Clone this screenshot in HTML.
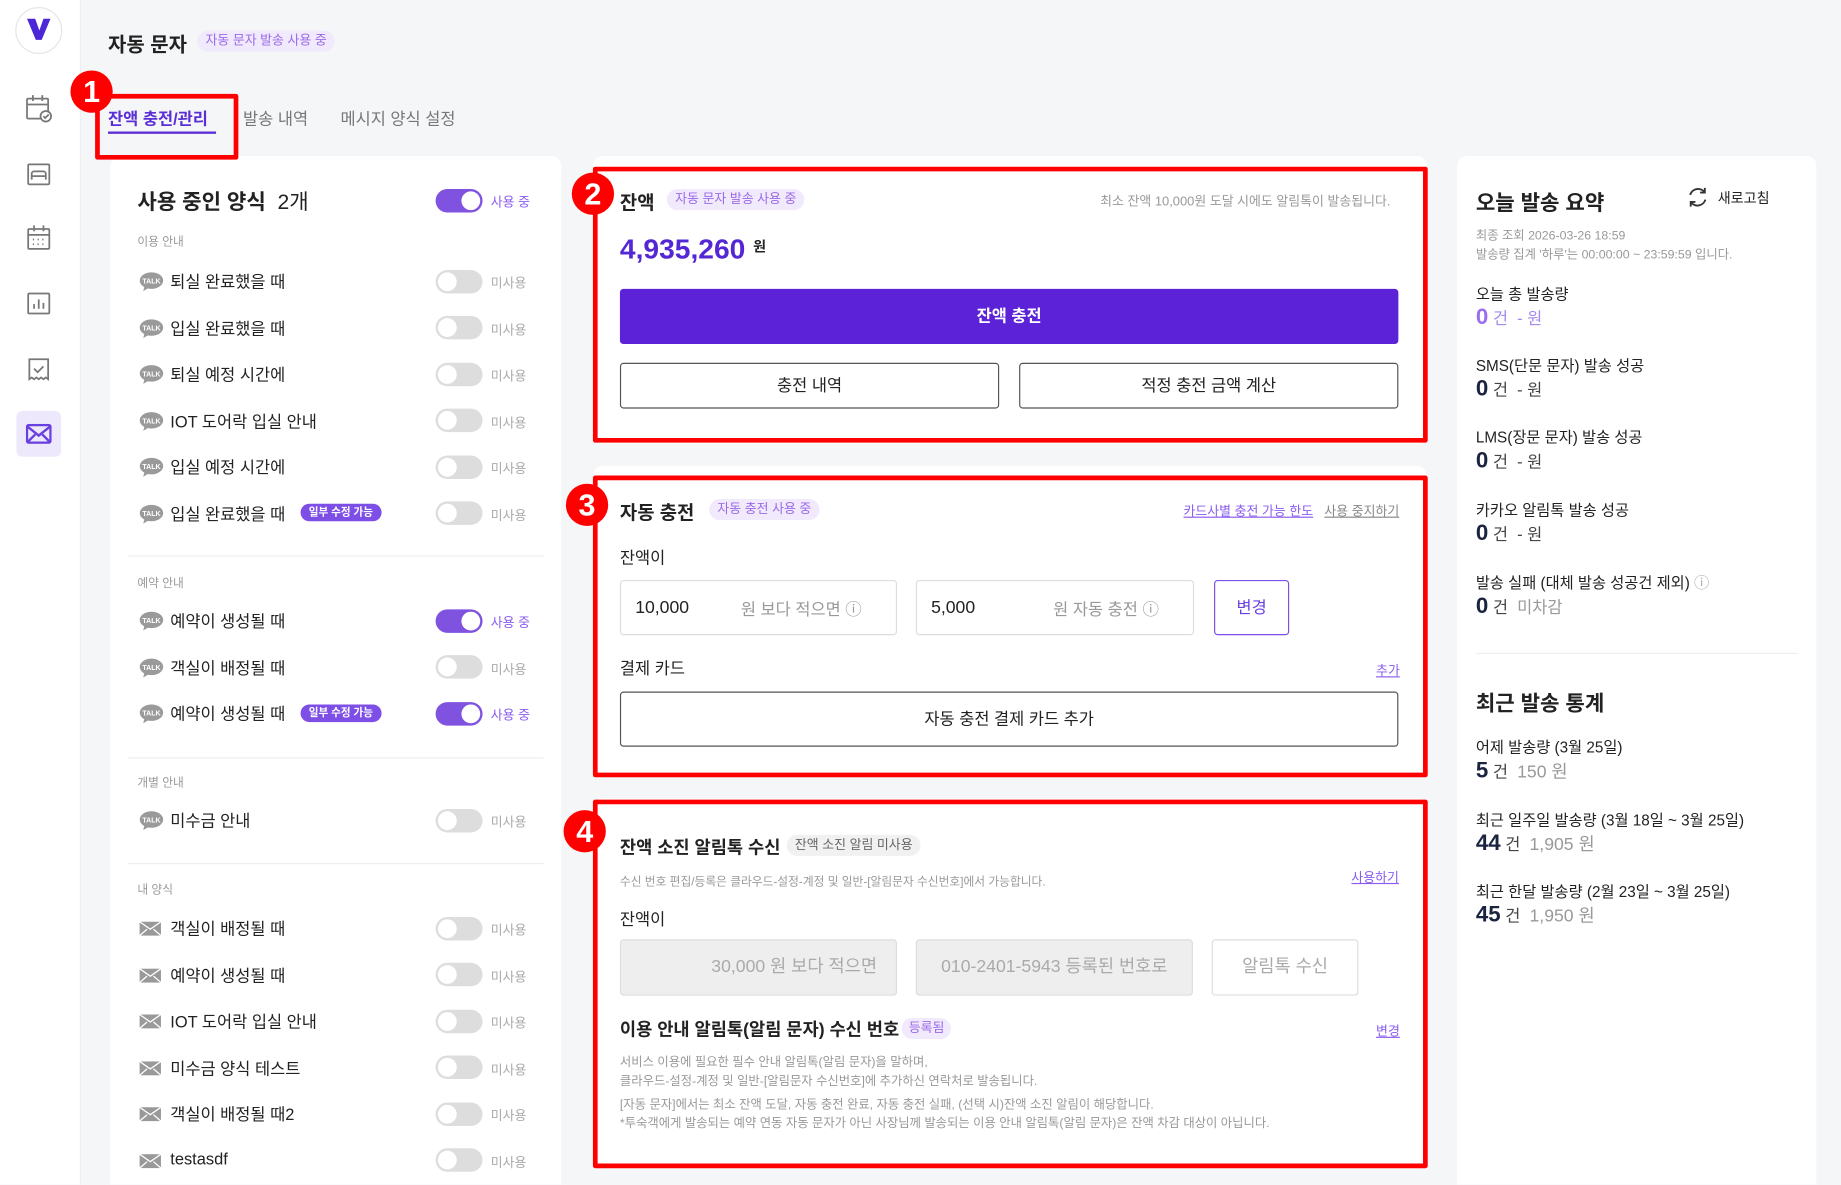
<!DOCTYPE html>
<html><head><meta charset="utf-8">
<style>
html,body{margin:0;padding:0;width:1841px;height:1185px;overflow:hidden;background:#f5f6f8;}
#w{position:absolute;left:0;top:0;width:1568px;height:1009px;overflow:hidden;transform:scale(1.17411);transform-origin:0 0;font-family:"Liberation Sans","Noto Sans CJK KR",sans-serif;color:#222;}
.a{position:absolute;white-space:nowrap;}
.card{position:absolute;background:#fff;border-radius:8px;}
.red{position:absolute;border:4px solid #f00;box-sizing:border-box;border-radius:2px;}
.num{position:absolute;width:36px;height:36px;border-radius:50%;background:#f00;color:#fff;font:bold 26px "Liberation Sans",sans-serif;text-align:center;line-height:36px;}
.badge{position:absolute;background:#f1eafd;color:#9a6ae8;font-size:11px;border-radius:9px;height:18px;line-height:18px;padding:0 7px;white-space:nowrap;}
.tg{position:absolute;width:40px;height:20px;border-radius:10px;background:#ddd;left:371px;}
.tg::after{content:"";position:absolute;top:2px;left:2px;width:16px;height:16px;border-radius:50%;background:#fff;}
.tg.on{background:#7f52e0;}
.tg.on::after{left:22px;}
.tl{position:absolute;left:418px;font-size:11px;color:#aaa;}
.tl.on{color:#8a5cf0;}
.row{position:absolute;left:145px;font-size:14px;color:#222;}
.ic{position:absolute;left:118px;}
.sec{position:absolute;left:117px;font-size:10px;color:#999;}
.hr{position:absolute;left:109px;width:354px;height:1px;background:#eee;}
.btn{position:absolute;box-sizing:border-box;border:1px solid #555;border-radius:3px;background:#fff;text-align:center;font-size:14px;color:#222;}
.inp{position:absolute;box-sizing:border-box;border:1px solid #ddd;border-radius:3px;background:#fff;font-size:15px;}
.g{color:#999;}
.lab{position:absolute;left:1257px;font-size:13px;color:#222;}
.val{position:absolute;left:1257px;font-size:14px;color:#444;}
.val b{font-size:19px;color:#1a2340;font-weight:bold;}
.sm{font-size:11px;color:#999;}
</style></head><body><div id="w">

<!-- sidebar -->
<div class="a" style="left:0;top:0;width:68px;height:1009px;background:#fff;border-right:1px solid #eceef2;"></div>
<div class="a" style="left:13px;top:6px;width:38px;height:38px;border-radius:50%;border:1px solid #e5e5e5;background:#fff;"></div>
<svg class="a" style="left:22px;top:15px" width="22" height="20" viewBox="0 0 22 20"><path d="M1 1h7l3.5 10L15 1h6l-7.5 18h-5z" fill="#4b27d8"/></svg>
<svg class="a" style="left:20px;top:80px" width="26" height="310" viewBox="0 0 26 310" fill="none" stroke="#777" stroke-width="1.5">
 <rect x="3" y="4" width="18" height="17" rx="1"/><path d="M3 9h18M8 1v5M16 1v5"/><circle cx="19" cy="19" r="4.5" fill="#fff"/><path d="M17 19l1.5 1.5 3-3"/>
 <rect x="4" y="60" width="18" height="17" rx="1"/><path d="M7 73v-5a2 2 0 012-2h8a2 2 0 012 2v5M7 70h12"/>
 <rect x="4" y="115" width="18" height="17" rx="1"/><path d="M4 120h18M9 112v5M17 112v5M8 124h1M12 124h1M16 124h1M8 128h1M12 128h1M16 128h1"/>
 <rect x="4" y="170" width="18" height="17" rx="1"/><path d="M9 183v-4M13 183v-8M17 183v-5"/>
 <path d="M5 226v17l2-1.5 2 1.5 2-1.5 2 1.5 2-1.5 2 1.5 2-1.5 2 1.5v-17z"/><path d="M9 234l3 3 5-5"/>
</svg>
<div class="a" style="left:14px;top:350px;width:38px;height:39px;border-radius:5px;background:#ede8fb;"></div>
<svg class="a" style="left:22px;top:361px" width="22" height="17" viewBox="0 0 22 17" fill="none" stroke="#6a3fe0" stroke-width="2"><rect x="1" y="1" width="20" height="15" rx="1.5"/><path d="M1 2l10 8 10-8M1 16l7-7M21 16l-7-7"/></svg>

<!-- header -->
<div class="a" style="left:92px;top:24px;font-size:17px;font-weight:bold;">자동 문자</div>
<div class="badge" style="left:168px;top:26px;">자동 문자 발송 사용 중</div>
<div class="a" style="left:92px;top:91px;font-size:14px;font-weight:bold;color:#5b2fd6;">잔액 충전/관리</div>
<div class="a" style="left:92px;top:112px;width:92px;height:2px;background:#5b2fd6;"></div>
<div class="a" style="left:207px;top:91px;font-size:14px;color:#777;">발송 내역</div>
<div class="a" style="left:290px;top:91px;font-size:14px;color:#777;">메시지 양식 설정</div>

<!-- left card -->
<div class="card" style="left:94px;top:133px;width:384px;height:876px;border-radius:8px 8px 0 0;"></div>
<div class="a" style="left:117px;top:158px;font-size:18px;font-weight:bold;">사용 중인 양식 &nbsp;<span style="font-weight:normal">2개</span></div>
<div class="tg on" style="top:161px"></div><div class="tl on" style="top:164px">사용 중</div>
<div class="sec" style="top:197px">이용 안내</div>

<!-- middle card 1 -->
<div class="card" style="left:505px;top:133px;width:710px;height:245px;"></div>
<div class="a" style="left:528px;top:159px;font-size:16px;font-weight:bold;">잔액</div>
<div class="badge" style="left:568px;top:161px;">자동 문자 발송 사용 중</div>
<div class="a sm" style="left:937px;top:163px;">최소 잔액 10,000원 도달 시에도 알림톡이 발송됩니다.</div>
<div class="a" style="left:528px;top:199px;font-size:24px;font-weight:bold;color:#5427d4;">4,935,260 <span style="font-size:12px;color:#222;vertical-align:6px;">원</span></div>
<div class="a" style="left:528px;top:246px;width:663px;height:47px;background:#5b22d8;border-radius:3px;color:#fff;font-size:14px;font-weight:bold;text-align:center;line-height:47px;">잔액 충전</div>
<div class="btn" style="left:528px;top:309px;width:323px;height:39px;line-height:37px;">충전 내역</div>
<div class="btn" style="left:868px;top:309px;width:323px;height:39px;line-height:37px;">적정 충전 금액 계산</div>

<!-- middle card 2 -->
<div class="card" style="left:505px;top:397px;width:710px;height:263px;"></div>
<div class="a" style="left:528px;top:423px;font-size:16px;font-weight:bold;">자동 충전</div>
<div class="badge" style="left:604px;top:425px;">자동 충전 사용 중</div>
<div class="a" style="left:1008px;top:427px;font-size:11px;color:#8a5cf0;text-decoration:underline;">카드사별 충전 가능 한도</div>
<div class="a" style="left:1128px;top:427px;font-size:11px;color:#888;text-decoration:underline;">사용 중지하기</div>
<div class="a" style="left:528px;top:465px;font-size:14px;">잔액이</div>
<div class="inp" style="left:528px;top:494px;width:236px;height:47px;"><span class="a" style="left:12px;top:14px;">10,000</span><span class="a g" style="left:102px;top:14px;font-size:14px;">원 보다 적으면 ⓘ</span></div>
<div class="inp" style="left:780px;top:494px;width:237px;height:47px;"><span class="a" style="left:12px;top:14px;">5,000</span><span class="a g" style="left:116px;top:14px;font-size:14px;">원 자동 충전 ⓘ</span></div>
<div class="a" style="left:1034px;top:494px;width:64px;height:47px;box-sizing:border-box;border:1px solid #7c4fe6;border-radius:3px;color:#6a3fe0;font-size:14px;text-align:center;line-height:45px;">변경</div>
<div class="a" style="left:528px;top:559px;font-size:14px;">결제 카드</div>
<div class="a" style="left:1172px;top:563px;font-size:11px;color:#8a5cf0;text-decoration:underline;">추가</div>
<div class="btn" style="left:528px;top:589px;width:663px;height:47px;line-height:45px;">자동 충전 결제 카드 추가</div>

<!-- middle card 3 -->
<div class="card" style="left:505px;top:680px;width:710px;height:315px;"></div>
<div class="a" style="left:528px;top:711px;font-size:15px;font-weight:bold;">잔액 소진 알림톡 수신</div>
<div class="badge" style="left:670px;top:711px;background:#f1f1f1;color:#666;">잔액 소진 알림 미사용</div>
<div class="a sm" style="left:528px;top:742px;font-size:10px;">수신 번호 편집/등록은 클라우드-설정-계정 및 일반-[알림문자 수신번호]에서 가능합니다.</div>
<div class="a" style="left:1151px;top:739px;font-size:11px;color:#8a5cf0;text-decoration:underline;">사용하기</div>
<div class="a" style="left:528px;top:773px;font-size:14px;">잔액이</div>
<div class="inp" style="left:528px;top:800px;width:236px;height:48px;background:#eee;color:#aaa;text-align:right;padding-right:16px;line-height:46px;">30,000 원 보다 적으면</div>
<div class="inp" style="left:780px;top:800px;width:236px;height:48px;background:#eee;color:#aaa;text-align:center;line-height:46px;">010-2401-5943 등록된 번호로</div>
<div class="inp" style="left:1032px;top:800px;width:125px;height:48px;color:#aaa;text-align:center;line-height:46px;">알림톡 수신</div>
<div class="a" style="left:528px;top:866px;font-size:15px;font-weight:bold;">이용 안내 알림톡(알림 문자) 수신 번호</div>
<div class="badge" style="left:768px;top:867px;padding:0 6px;">등록됨</div>
<div class="a" style="left:1172px;top:870px;font-size:11px;color:#8a5cf0;text-decoration:underline;">변경</div>
<div class="a sm" style="left:528px;top:897px;font-size:10.5px;line-height:16px;">서비스 이용에 필요한 필수 안내 알림톡(알림 문자)을 말하며,<br>클라우드-설정-계정 및 일반-[알림문자 수신번호]에 추가하신 연락처로 발송됩니다.</div>
<div class="a sm" style="left:528px;top:933px;font-size:10.5px;line-height:16px;">[자동 문자]에서는 최소 잔액 도달, 자동 충전 완료, 자동 충전 실패, (선택 시)잔액 소진 알림이 해당합니다.<br>*투숙객에게 발송되는 예약 연동 자동 문자가 아닌 사장님께 발송되는 이용 안내 알림톡(알림 문자)은 잔액 차감 대상이 아닙니다.</div>

<!-- right card -->
<div class="card" style="left:1241px;top:133px;width:306px;height:876px;border-radius:8px 8px 0 0;"></div>
<div class="a" style="left:1257px;top:159px;font-size:18px;font-weight:bold;">오늘 발송 요약</div>
<svg class="a" style="left:1436px;top:158px" width="20" height="20" viewBox="0 0 20 20" fill="none" stroke="#333" stroke-width="1.6"><path d="M16 6A7 7 0 003.5 8M4 14a7 7 0 0012.5-2"/><path d="M16 2v4h-4M4 18v-4h4"/></svg>
<div class="a" style="left:1463px;top:160px;font-size:12px;">새로고침</div>
<div class="a sm" style="left:1257px;top:193px;font-size:10.5px;line-height:16px;">최종 조회 2026-03-26 18:59<br>발송량 집계 '하루'는 00:00:00 ~ 23:59:59 입니다.</div>
<div class="lab" style="top:240px">오늘 총 발송량</div>
<div class="val" style="top:260px;color:#a58af0;"><b style="color:#9a6ef0">0</b> 건 &nbsp;- 원</div>
<div class="lab" style="top:301px">SMS(단문 문자) 발송 성공</div>
<div class="val" style="top:321px"><b>0</b> 건 &nbsp;- 원</div>
<div class="lab" style="top:362px">LMS(장문 문자) 발송 성공</div>
<div class="val" style="top:382px"><b>0</b> 건 &nbsp;- 원</div>
<div class="lab" style="top:424px">카카오 알림톡 발송 성공</div>
<div class="val" style="top:444px"><b>0</b> 건 &nbsp;- 원</div>
<div class="lab" style="top:486px">발송 실패 (대체 발송 성공건 제외) <span style="color:#aaa">ⓘ</span></div>
<div class="val" style="top:506px"><b>0</b> 건 &nbsp;<span class="g">미차감</span></div>
<div class="a" style="left:1257px;top:556px;width:274px;height:1px;background:#eee;"></div>
<div class="a" style="left:1257px;top:585px;font-size:18px;font-weight:bold;">최근 발송 통계</div>
<div class="lab" style="top:626px">어제 발송량 (3월 25일)</div>
<div class="val" style="top:646px"><b>5</b> 건 &nbsp;<span class="g" style="font-size:15px">150 원</span></div>
<div class="lab" style="top:688px">최근 일주일 발송량 (3월 18일 ~ 3월 25일)</div>
<div class="val" style="top:708px"><b>44</b> 건 &nbsp;<span class="g" style="font-size:15px">1,905 원</span></div>
<div class="lab" style="top:749px">최근 한달 발송량 (2월 23일 ~ 3월 25일)</div>
<div class="val" style="top:769px"><b>45</b> 건 &nbsp;<span class="g" style="font-size:15px">1,950 원</span></div>

<!-- left rows -->
<svg width="0" height="0" style="position:absolute"><defs>
<symbol id="talk" viewBox="0 0 22 18"><ellipse cx="11" cy="8" rx="10" ry="7" fill="#9a9a9a"/><path d="M5 13l-1 4 5-3z" fill="#9a9a9a"/><text x="11" y="10.5" font-size="6" fill="#fff" text-anchor="middle" font-family="Liberation Sans" font-weight="bold">TALK</text></symbol>
<symbol id="mail" viewBox="0 0 22 16"><rect x="1" y="2" width="20" height="13" fill="#999"/><path d="M1 2l10 7 10-7M1 15l7-6M21 15l-7-6" stroke="#fff" stroke-width="1.2" fill="none"/></symbol>
</defs></svg>

<svg class="ic" style="top:231px" width="22" height="18"><use href="#talk"/></svg><div class="row" style="top:230px">퇴실 완료했을 때</div><div class="tg" style="top:230px"></div><div class="tl" style="top:233px">미사용</div>
<svg class="ic" style="top:271px" width="22" height="18"><use href="#talk"/></svg><div class="row" style="top:270px">입실 완료했을 때</div><div class="tg" style="top:269px"></div><div class="tl" style="top:273px">미사용</div>
<svg class="ic" style="top:310px" width="22" height="18"><use href="#talk"/></svg><div class="row" style="top:309px">퇴실 예정 시간에</div><div class="tg" style="top:309px"></div><div class="tl" style="top:312px">미사용</div>
<svg class="ic" style="top:350px" width="22" height="18"><use href="#talk"/></svg><div class="row" style="top:349px">IOT 도어락 입실 안내</div><div class="tg" style="top:348px"></div><div class="tl" style="top:352px">미사용</div>
<svg class="ic" style="top:389px" width="22" height="18"><use href="#talk"/></svg><div class="row" style="top:388px">입실 예정 시간에</div><div class="tg" style="top:388px"></div><div class="tl" style="top:391px">미사용</div>
<svg class="ic" style="top:429px" width="22" height="18"><use href="#talk"/></svg><div class="row" style="top:428px">입실 완료했을 때</div><div class="badge" style="left:256px;top:429px;height:15px;line-height:15px;background:#7e4fe6;color:#fff;font-size:9px;font-weight:bold;">일부 수정 가능</div><div class="tg" style="top:427px"></div><div class="tl" style="top:431px">미사용</div>
<div class="hr" style="top:473px"></div>
<div class="sec" style="top:488px">예약 안내</div>
<svg class="ic" style="top:520px" width="22" height="18"><use href="#talk"/></svg><div class="row" style="top:519px">예약이 생성될 때</div><div class="tg on" style="top:519px"></div><div class="tl on" style="top:522px">사용 중</div>
<svg class="ic" style="top:560px" width="22" height="18"><use href="#talk"/></svg><div class="row" style="top:559px">객실이 배정될 때</div><div class="tg" style="top:558px"></div><div class="tl" style="top:562px">미사용</div>
<svg class="ic" style="top:599px" width="22" height="18"><use href="#talk"/></svg><div class="row" style="top:598px">예약이 생성될 때</div><div class="badge" style="left:256px;top:600px;height:15px;line-height:15px;background:#7e4fe6;color:#fff;font-size:9px;font-weight:bold;">일부 수정 가능</div><div class="tg on" style="top:598px"></div><div class="tl on" style="top:601px">사용 중</div>
<div class="hr" style="top:645px"></div>
<div class="sec" style="top:658px">개별 안내</div>
<svg class="ic" style="top:690px" width="22" height="18"><use href="#talk"/></svg><div class="row" style="top:689px">미수금 안내</div><div class="tg" style="top:689px"></div><div class="tl" style="top:692px">미사용</div>
<div class="hr" style="top:735px"></div>
<div class="sec" style="top:749px">내 양식</div>
<svg class="ic" style="top:783px" width="20" height="15"><use href="#mail"/></svg><div class="row" style="top:781px">객실이 배정될 때</div><div class="tg" style="top:781px"></div><div class="tl" style="top:784px">미사용</div>
<svg class="ic" style="top:823px" width="20" height="15"><use href="#mail"/></svg><div class="row" style="top:821px">예약이 생성될 때</div><div class="tg" style="top:820px"></div><div class="tl" style="top:824px">미사용</div>
<svg class="ic" style="top:862px" width="20" height="15"><use href="#mail"/></svg><div class="row" style="top:860px">IOT 도어락 입실 안내</div><div class="tg" style="top:860px"></div><div class="tl" style="top:863px">미사용</div>
<svg class="ic" style="top:902px" width="20" height="15"><use href="#mail"/></svg><div class="row" style="top:900px">미수금 양식 테스트</div><div class="tg" style="top:899px"></div><div class="tl" style="top:903px">미사용</div>
<svg class="ic" style="top:941px" width="20" height="15"><use href="#mail"/></svg><div class="row" style="top:939px">객실이 배정될 때2</div><div class="tg" style="top:939px"></div><div class="tl" style="top:942px">미사용</div>
<svg class="ic" style="top:981px" width="20" height="15"><use href="#mail"/></svg><div class="row" style="top:979px">testasdf</div><div class="tg" style="top:978px"></div><div class="tl" style="top:982px">미사용</div>

<!-- red annotations -->
<div class="red" style="left:81px;top:80px;width:122px;height:56px;"></div>
<div class="num" style="left:60px;top:60px;">1</div>
<div class="red" style="left:505px;top:142px;width:711px;height:235px;"></div>
<div class="num" style="left:487px;top:147px;">2</div>
<div class="red" style="left:505px;top:405px;width:711px;height:257px;"></div>
<div class="num" style="left:482px;top:412px;">3</div>
<div class="red" style="left:505px;top:681px;width:711px;height:314px;"></div>
<div class="num" style="left:480px;top:690px;">4</div>

</div></body></html>
